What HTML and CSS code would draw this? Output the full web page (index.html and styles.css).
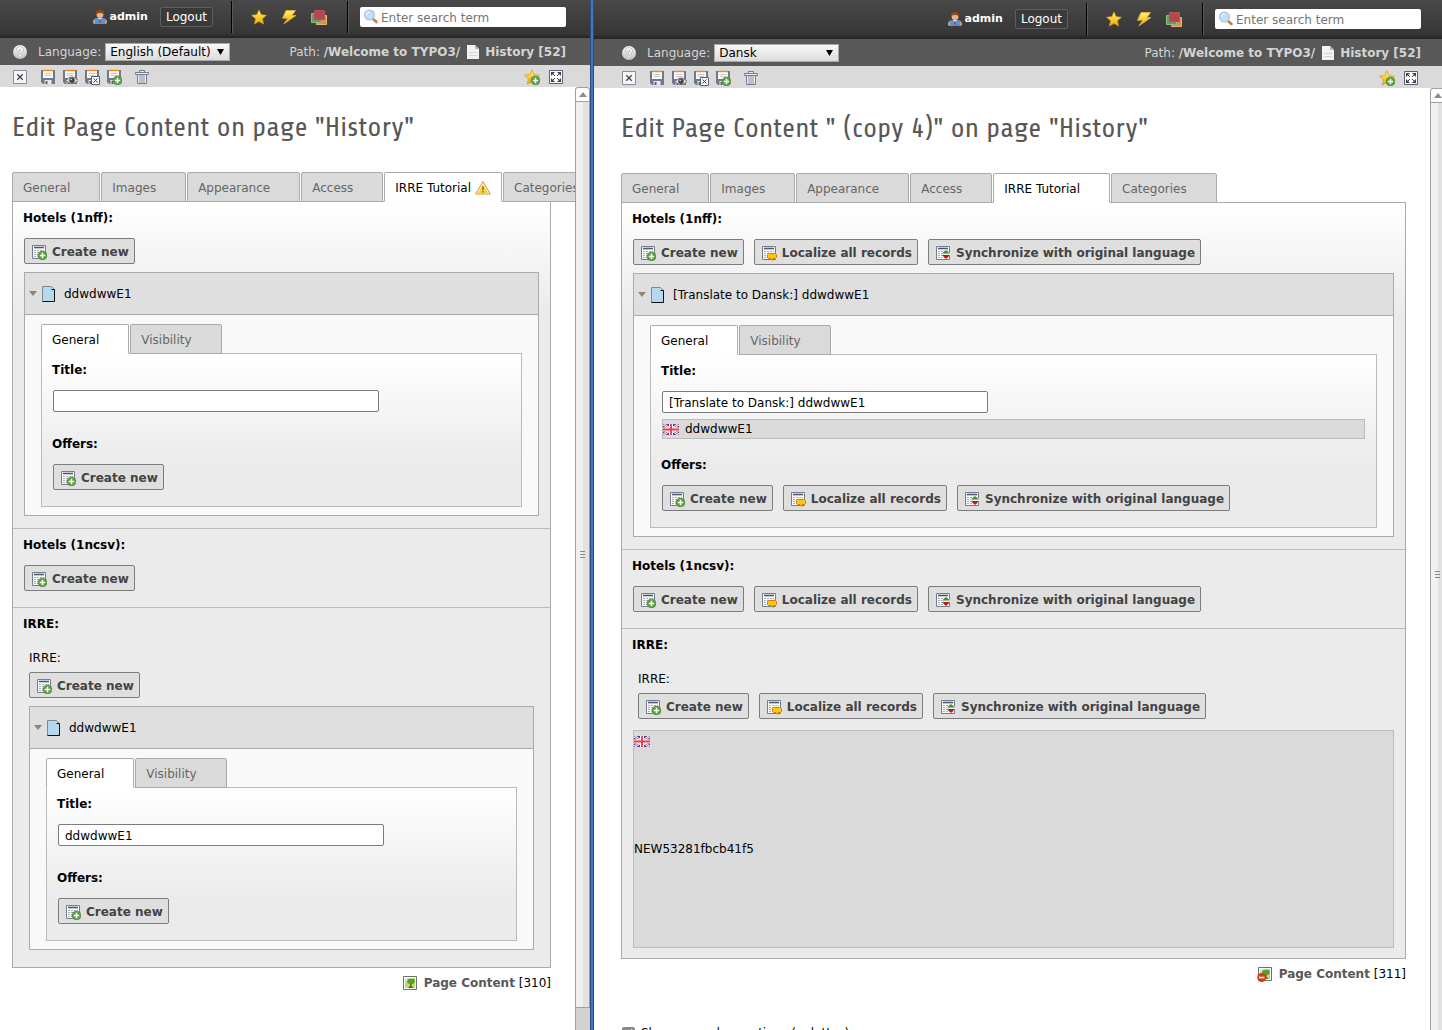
FILE: index.html
```html
<!DOCTYPE html>
<html lang="en">
<head>
<meta charset="utf-8">
<title>TYPO3 - Edit Page Content</title>
<link rel="stylesheet" href="styles.css">
</head>
<body>
<svg class="sprite" aria-hidden="true">
  <defs>
    <linearGradient id="gold" x1="0" y1="0" x2="0" y2="1"><stop offset="0" stop-color="#fff07a"/><stop offset=".5" stop-color="#fbcf2f"/><stop offset="1" stop-color="#f0a818"/></linearGradient>
    <linearGradient id="ball" x1="0" y1="0" x2="0" y2="1"><stop offset="0" stop-color="#f4f4f4"/><stop offset="1" stop-color="#c4c4c4"/></linearGradient>
  </defs>
  <symbol id="user" viewBox="0 0 16 16">
    <path d="M1 14c0-4 2-5 5-5h4c3 0 5 1 5 5l-2 1H3z" fill="#5b93d0"/><path d="M1 14c0-2 .5-3 1.500-4L3 15z M15 14c0-2-.5-3-1.500-4L13 15z" fill="#e8a060"/>
    <path d="M6 9l2 3 2-3z" fill="#cfe0f2"/><path d="M7.500 10h1l.5 3-1 1-1-1z" fill="#d03030"/>
    <circle cx="8" cy="5.500" r="3.500" fill="#eeb180"/><path d="M4 6.500C3 2 5.500 1 8 1s5 1 4 5.500c-1-2-2-2.500-4-2.500S5 4.500 4 6.500z" fill="#8a4a20"/>
  </symbol>
  <symbol id="star" viewBox="0 0 16 16"><path d="M8 .8l2.200 4.800 5.300.6-4 3.600 1.200 5.400L8 12.500l-4.700 2.700 1.200-5.400-4-3.600 5.300-.6z" fill="url(#gold)" stroke="#c98d12" stroke-width=".6"/></symbol>
  <symbol id="bolt" viewBox="0 0 16 16"><path d="M5 1.500h9.500L11 6.500h4L3 14.800 6.800 9.200H1.500z" fill="url(#gold)" stroke="#e0a83a" stroke-width=".9"/></symbol>
  <symbol id="stack" viewBox="0 0 16 16"><path d="M5.500 6.500h10v9h-10z" fill="#d98f4e" stroke="#f0b070"/><path d="M.5 4.500h10v9H.5z" fill="#6c9a64" stroke="#8fbd86"/><path d="M3.500 1.500h10v9h-10z" fill="#b8474c" stroke="#b25458"/></symbol>
  <symbol id="lens" viewBox="0 0 16 16"><path d="M9.500 9.500l4 3.500" stroke="#c5813a" stroke-width="2.600" stroke-linecap="round"/><circle cx="6.500" cy="6" r="4.900" fill="#c2defa" stroke="#a9c4e6" stroke-width="1.200"/><path d="M3.500 6a3 3 0 0 1 3-3" stroke="#fff" fill="none"/></symbol>
  <symbol id="help" viewBox="0 0 16 16"><circle cx="8" cy="8" r="7" fill="url(#ball)"/><path d="M5.700 6.200c0-3 4.600-3 4.600-.3 0 1.700-2.200 1.700-2.200 3.300M8 10.800v1.600" stroke="#a4a4a4" stroke-width="2.600" fill="none"/><path d="M5.700 6.200c0-3 4.600-3 4.600-.3 0 1.700-2.200 1.700-2.200 3.300M8 10.800v1.600" stroke="#fff" stroke-width="1.600" fill="none"/></symbol>
  <symbol id="page" viewBox="0 0 16 16"><path d="M2 1h8l4 4v10H2z" fill="#f3f3f3"/><path d="M10 1v4h4z" fill="#b5b5b5"/><path d="M4 8.500h8M4 11.500h8" stroke="#d4d4d4"/></symbol>
  <symbol id="close" viewBox="0 0 16 16"><path d="M1.500 1.500h13v13h-13z" fill="#f5f5f8" stroke="#858da0"/><path d="M5.300 5.300l5.400 5.400M10.700 5.300l-5.400 5.400" stroke="#444" stroke-width="1.300"/></symbol>
  <symbol id="floppy" viewBox="0 0 16 16"><path d="M1 1h14v14H3l-2-2z" fill="#70788c"/><path d="M3 1h10v8H3z" fill="#fafafa"/><path d="M3 1.500h10" stroke="#f08a10" stroke-width="1.400"/><path d="M4.500 4.500h7M4.500 6.500h7" stroke="#b9bcc4" stroke-width=".8"/><path d="M4.500 11h7v4h-7z" fill="#e8e8ec"/><path d="M5.500 12h2v3h-2z" fill="#596175"/></symbol>
  <symbol id="plus" viewBox="0 0 16 16"><circle cx="11.500" cy="11.500" r="4.600" fill="#5c9e45" stroke="#4b8738" stroke-width=".5"/><path d="M8.800 11.500h5.400M11.500 8.800v5.400" stroke="#fff" stroke-width="1.500"/></symbol>
  <symbol id="save-view" viewBox="0 0 16 16"><use href="#floppy"/><path d="M4 11.500c3-4.500 9-4.500 12 0-3 4-9 4-12 0z" fill="#ddd" stroke="#666"/><circle cx="10" cy="11.300" r="2.700" fill="#444"/><circle cx="9.300" cy="10.500" r=".8" fill="#ddd"/></symbol>
  <symbol id="save-close" viewBox="0 0 16 16"><use href="#floppy"/><path d="M7.500 7.500h8v8h-8z" fill="#f7f7f7" stroke="#596175"/><path d="M9.500 9.500l4 4M13.500 9.500l-4 4" stroke="#444"/></symbol>
  <symbol id="save-new" viewBox="0 0 16 16"><use href="#floppy"/><use href="#plus"/></symbol>
  <symbol id="trash" viewBox="0 0 16 16"><path d="M5.500 3V1.500h5V3M1.500 3.500h13v2h-13zM3.500 5.500v9h9v-9" fill="#eceef2" stroke="#737b8e"/><path d="M6 6v8M8 6v8M10 6v8" stroke="#8a91a2"/></symbol>
  <symbol id="bookmark" viewBox="0 0 16 16"><use href="#star"/><use href="#plus"/></symbol>
  <symbol id="expand" viewBox="0 0 16 16"><path d="M1.500 1.500h13v13h-13z" fill="#fafafa" stroke="#596175"/><path d="M3 3h4L3 7zM13 3v4L9 3zM3 13V9l4 4zM13 13H9l4-4z" fill="#3b4050"/><path d="M4 4l3 3M12 4L9 7M4 12l3-3M12 12L9 9" stroke="#3b4050"/></symbol>
  <symbol id="list" viewBox="0 0 16 16"><path d="M1.500 1.500h13v13h-13z" fill="#fafafa" stroke="#737d92"/><path d="M3 3.500h10" stroke="#4f586b" stroke-width="1.600"/><path d="M3 6.500h10M3 8.500h10M3 10.500h10M3 12.500h10" stroke="#a9adb8" stroke-dasharray="2 1"/></symbol>
  <symbol id="create" viewBox="0 0 16 16"><use href="#list"/><use href="#plus"/></symbol>
  <symbol id="localize" viewBox="0 0 16 16"><use href="#list"/><path d="M7.500 8.500h7l1 1v3l-1 1h-2.500v2l-2-2H7.500l-1-1v-3z" fill="#fdc60c" stroke="#dc7f08"/></symbol>
  <symbol id="sync" viewBox="0 0 16 16"><use href="#list"/><path d="M7 7.500h8v3H7z" fill="#eef2ee"/><path d="M7 8.500L11 5l4 3.500z" fill="#3f8f3a"/><path d="M7 10h8l-4 4z" fill="#c01818"/></symbol>
  <symbol id="record" viewBox="0 0 16 16"><path d="M1.500.5h9l3 3v12h-12z" fill="#b3d8f0" stroke="#7d8890"/><path d="M10.500 3.500h3v12H1.500" fill="none" stroke="#111"/></symbol>
  <symbol id="warning" viewBox="0 0 16 16"><path d="M8 1.500L15.300 14H.7z" fill="#fdf3c0" stroke="#d8953a" stroke-linejoin="round"/><path d="M8 4.500L13 13H3z" fill="#f6cf45"/><path d="M8 6.500v3.500M8 11v1.500" stroke="#9a6a10" stroke-width="1.500"/></symbol>
  <symbol id="flag" viewBox="0 0 16 11"><path d="M0 0h16v11H0z" fill="#34459c"/><path d="M0 0l16 11M16 0L0 11" stroke="#fff" stroke-width="2.600"/><path d="M0 0l16 11M16 0L0 11" stroke="#e0455a" stroke-width=".9"/><path d="M8 0v11M0 5.500h16" stroke="#fff" stroke-width="4"/><path d="M8 0v11M0 5.500h16" stroke="#e8384a" stroke-width="1.800"/></symbol>
  <symbol id="picture" viewBox="0 0 16 16"><path d="M1.500 1.500h13v13h-13z" fill="#fff" stroke="#6f6f6f"/><path d="M3 3h10v10H3z" fill="#b9dd6a"/><path d="M3 3h5L3 7z" fill="#cfe6fa"/><path d="M6 4h6l1 3-2 2-5-.5-1-2z" fill="#4fa62a"/><path d="M8 8.500h1.500V11l2 2H6l2-2z" fill="#6a5a20"/></symbol>
  <symbol id="picture-hidden" viewBox="0 0 16 16"><use href="#picture"/><circle cx="4.700" cy="11.500" r="4.500" fill="#d93a1e"/><path d="M2 11.500h5.400" stroke="#fff" stroke-width="1.600"/></symbol>
</svg>

<main class="compare">
  <section class="pane">
    <header class="topbar">
      <a class="user" href="#"><svg class="icon"><use href="#user"/></svg>admin</a>
      <button class="logout" type="button">Logout</button>
      <nav class="shortcuts">
        <a href="#" aria-label="Bookmarks"><svg class="icon"><use href="#star"/></svg></a>
        <a href="#" aria-label="Clear cache"><svg class="icon"><use href="#bolt"/></svg></a>
        <a href="#" aria-label="Workspaces"><svg class="icon"><use href="#stack"/></svg></a>
      </nav>
      <label class="search"><svg class="icon"><use href="#lens"/></svg><input type="search" placeholder="Enter search term" aria-label="Search"></label>
    </header>
    <div class="docbar">
      <a class="help" href="#" aria-label="Help"><svg class="icon"><use href="#help"/></svg></a>
      <label for="lang-l">Language:</label>
      <span class="select"><select id="lang-l"><option>English (Default)</option></select><svg viewBox="0 0 8 8"><path d="M0 1h8L4 8z"/></svg></span>
      <p class="path">Path: <b>/Welcome to TYPO3/</b><svg class="icon"><use href="#page"/></svg><b>History [52]</b></p>
    </div>
    <div class="toolbar">
      <button type="button" aria-label="Close"><svg class="icon"><use href="#close"/></svg></button>
      <span class="saves">
        <button type="button" aria-label="Save"><svg class="icon"><use href="#floppy"/></svg></button>
        <button type="button" aria-label="Save and view"><svg class="icon"><use href="#save-view"/></svg></button>
        <button type="button" aria-label="Save and close"><svg class="icon"><use href="#save-close"/></svg></button>
        <button type="button" aria-label="Save and new"><svg class="icon"><use href="#save-new"/></svg></button>
      </span>
      <button type="button" aria-label="Delete"><svg class="icon"><use href="#trash"/></svg></button>
      <span class="extras">
        <button type="button" aria-label="Bookmark"><svg class="icon"><use href="#bookmark"/></svg></button>
        <button type="button" aria-label="Open in window"><svg class="icon"><use href="#expand"/></svg></button>
      </span>
    </div>
    <div class="viewport">
      <form class="content">
        <h1>Edit Page Content on page "History"</h1>
        <div class="tabs">
          <button type="button" class="tab">General</button><button type="button" class="tab">Images</button><button type="button" class="tab">Appearance</button><button type="button" class="tab">Access</button><button type="button" class="tab active warn">IRRE Tutorial<svg class="icon"><use href="#warning"/></svg></button><button type="button" class="tab">Categories</button>
        </div>
        <div class="panel">
          <section class="field">
            <h2>Hotels (1nff):</h2>
            <div class="actions"><button type="button" class="btn"><svg class="icon"><use href="#create"/></svg>Create new</button></div>
            <div class="record">
              <div class="record-head"><svg class="twisty" viewBox="0 0 8 5"><path d="M0 0h8L4 5z"/></svg><svg class="icon"><use href="#record"/></svg><span>ddwdwwE1</span></div>
              <div class="record-body">
                <div class="tabs"><button type="button" class="tab active">General</button><button type="button" class="tab">Visibility</button></div>
                <div class="panel inner">
                  <h2><label for="title-1">Title:</label></h2>
                  <input class="text" id="title-1" type="text">
                  <h2 class="spaced">Offers:</h2>
                  <div class="actions"><button type="button" class="btn"><svg class="icon"><use href="#create"/></svg>Create new</button></div>
                </div>
              </div>
            </div>
          </section>
          <section class="field simple">
            <h2>Hotels (1ncsv):</h2>
            <div class="actions"><button type="button" class="btn"><svg class="icon"><use href="#create"/></svg>Create new</button></div>
          </section>
          <section class="field nested">
            <h2>IRRE:</h2>
            <h3>IRRE:</h3>
            <div class="actions"><button type="button" class="btn"><svg class="icon"><use href="#create"/></svg>Create new</button></div>
            <div class="record">
              <div class="record-head"><svg class="twisty" viewBox="0 0 8 5"><path d="M0 0h8L4 5z"/></svg><svg class="icon"><use href="#record"/></svg><span>ddwdwwE1</span></div>
              <div class="record-body">
                <div class="tabs"><button type="button" class="tab active">General</button><button type="button" class="tab">Visibility</button></div>
                <div class="panel inner">
                  <h2><label for="title-2">Title:</label></h2>
                  <input class="text" id="title-2" type="text" value="ddwdwwE1">
                  <h2 class="spaced">Offers:</h2>
                  <div class="actions"><button type="button" class="btn"><svg class="icon"><use href="#create"/></svg>Create new</button></div>
                </div>
              </div>
            </div>
          </section>
        </div>
        <p class="recinfo"><svg class="icon"><use href="#picture"/></svg><span><b>Page Content</b> [310]</span></p>
      </form>
      <div class="scrollbar"><div class="up"><svg viewBox="0 0 8 5"><path d="M0 5h8L4 0z"/></svg></div><div class="thumb"><span class="grip"></span></div><div class="track"></div></div>
    </div>
  </section>

  <div class="divider"></div>

  <section class="pane translated">
    <header class="topbar">
      <a class="user" href="#"><svg class="icon"><use href="#user"/></svg>admin</a>
      <button class="logout" type="button">Logout</button>
      <nav class="shortcuts">
        <a href="#" aria-label="Bookmarks"><svg class="icon"><use href="#star"/></svg></a>
        <a href="#" aria-label="Clear cache"><svg class="icon"><use href="#bolt"/></svg></a>
        <a href="#" aria-label="Workspaces"><svg class="icon"><use href="#stack"/></svg></a>
      </nav>
      <label class="search"><svg class="icon"><use href="#lens"/></svg><input type="search" placeholder="Enter search term" aria-label="Search"></label>
    </header>
    <div class="docbar">
      <a class="help" href="#" aria-label="Help"><svg class="icon"><use href="#help"/></svg></a>
      <label for="lang-r">Language:</label>
      <span class="select"><select id="lang-r"><option>Dansk</option></select><svg viewBox="0 0 8 8"><path d="M0 1h8L4 8z"/></svg></span>
      <p class="path">Path: <b>/Welcome to TYPO3/</b><svg class="icon"><use href="#page"/></svg><b>History [52]</b></p>
    </div>
    <div class="toolbar">
      <button type="button" aria-label="Close"><svg class="icon"><use href="#close"/></svg></button>
      <span class="saves">
        <button type="button" aria-label="Save"><svg class="icon"><use href="#floppy"/></svg></button>
        <button type="button" aria-label="Save and view"><svg class="icon"><use href="#save-view"/></svg></button>
        <button type="button" aria-label="Save and close"><svg class="icon"><use href="#save-close"/></svg></button>
        <button type="button" aria-label="Save and new"><svg class="icon"><use href="#save-new"/></svg></button>
      </span>
      <button type="button" aria-label="Delete"><svg class="icon"><use href="#trash"/></svg></button>
      <span class="extras">
        <button type="button" aria-label="Bookmark"><svg class="icon"><use href="#bookmark"/></svg></button>
        <button type="button" aria-label="Open in window"><svg class="icon"><use href="#expand"/></svg></button>
      </span>
    </div>
    <div class="viewport">
      <form class="content">
        <h1>Edit Page Content " (copy 4)" on page "History"</h1>
        <div class="tabs">
          <button type="button" class="tab">General</button><button type="button" class="tab">Images</button><button type="button" class="tab">Appearance</button><button type="button" class="tab">Access</button><button type="button" class="tab active">IRRE Tutorial</button><button type="button" class="tab">Categories</button>
        </div>
        <div class="panel">
          <section class="field">
            <h2>Hotels (1nff):</h2>
            <div class="actions">
              <button type="button" class="btn"><svg class="icon"><use href="#create"/></svg>Create new</button>
              <button type="button" class="btn"><svg class="icon"><use href="#localize"/></svg>Localize all records</button>
              <button type="button" class="btn"><svg class="icon"><use href="#sync"/></svg>Synchronize with original language</button>
            </div>
            <div class="record">
              <div class="record-head"><svg class="twisty" viewBox="0 0 8 5"><path d="M0 0h8L4 5z"/></svg><svg class="icon"><use href="#record"/></svg><span>[Translate to Dansk:] ddwdwwE1</span></div>
              <div class="record-body">
                <div class="tabs"><button type="button" class="tab active">General</button><button type="button" class="tab">Visibility</button></div>
                <div class="panel inner">
                  <h2><label for="title-3">Title:</label></h2>
                  <input class="text" id="title-3" type="text" value="[Translate to Dansk:] ddwdwwE1">
                  <div class="original"><svg class="flag"><use href="#flag"/></svg>ddwdwwE1</div>
                  <h2 class="after-original">Offers:</h2>
                  <div class="actions">
                    <button type="button" class="btn"><svg class="icon"><use href="#create"/></svg>Create new</button>
                    <button type="button" class="btn"><svg class="icon"><use href="#localize"/></svg>Localize all records</button>
                    <button type="button" class="btn"><svg class="icon"><use href="#sync"/></svg>Synchronize with original language</button>
                  </div>
                </div>
              </div>
            </div>
          </section>
          <section class="field simple">
            <h2>Hotels (1ncsv):</h2>
            <div class="actions">
              <button type="button" class="btn"><svg class="icon"><use href="#create"/></svg>Create new</button>
              <button type="button" class="btn"><svg class="icon"><use href="#localize"/></svg>Localize all records</button>
              <button type="button" class="btn"><svg class="icon"><use href="#sync"/></svg>Synchronize with original language</button>
            </div>
          </section>
          <section class="field nested">
            <h2>IRRE:</h2>
            <h3>IRRE:</h3>
            <div class="actions">
              <button type="button" class="btn"><svg class="icon"><use href="#create"/></svg>Create new</button>
              <button type="button" class="btn"><svg class="icon"><use href="#localize"/></svg>Localize all records</button>
              <button type="button" class="btn"><svg class="icon"><use href="#sync"/></svg>Synchronize with original language</button>
            </div>
            <div class="placeholder"><svg class="flag"><use href="#flag"/></svg><span>NEW53281fbcb41f5</span></div>
          </section>
        </div>
        <p class="recinfo"><svg class="icon"><use href="#picture-hidden"/></svg><span><b>Page Content</b> [311]</span></p>
        <label class="option"><input type="checkbox" checked>Show secondary options (palettes)</label>
      </form>
      <div class="scrollbar"><div class="up"><svg viewBox="0 0 8 5"><path d="M0 5h8L4 0z"/></svg></div><div class="thumb"><span class="grip"></span></div></div>
    </div>
  </section>
</main>
</body>
</html>
```

FILE: styles.css
```css
* { box-sizing: border-box; }
body { margin: 0; font: 12px/16px Verdana, "DejaVu Sans", sans-serif; color: #000; background: #fff; overflow: hidden; }
h1, h2, h3, p { margin: 0; font-size: 12px; line-height: 16px; }
h3 { font-weight: normal; }
button, input, select { font: inherit; color: inherit; margin: 0; }
svg { display: block; flex: none; }
.sprite { position: absolute; width: 0; height: 0; }
.icon { width: 16px; height: 16px; }
.flag { width: 16px; height: 11px; }

.compare { display: grid; grid-template-columns: 590fr 4px 851fr; height: 100vh; margin-right: -3px; }
.pane { --gutter: 12px; display: flex; flex-direction: column; min-width: 0; min-height: 0; }
.translated { --gutter: 27px; }
.divider { background: #4473c8; border: solid #2b4a80; border-width: 0 1px; }

.topbar { display: flex; justify-content: flex-end; height: 38px; padding: 0 24px 4px 12px; align-items: center; color: #fff; background: linear-gradient(#494949, #363636 34px, #242424); flex: none; }
.translated .topbar { height: 39px; padding-top: 2px; }
.user { display: flex; align-items: center; gap: 2px; font-size: 11px; font-weight: bold; color: #fff; text-decoration: none; }
.logout { height: 20px; padding: 0 5px; margin: 0 18px 0 12px; background: #3a3a3a; border: 1px solid #5e5e5e; border-radius: 2px; color: #fff; line-height: 16px; }
.shortcuts { display: flex; align-items: center; gap: 14px; height: 32px; padding: 0 20px 0 19px; border: solid #000; border-width: 0 1px; box-shadow: inset 1px 0 #5a5a5a, 1px 0 #5a5a5a; }
.search { display: flex; align-items: center; gap: 2px; width: 206px; height: 20px; margin-left: 12px; padding: 0 3px; border-radius: 2px; background: #fff; }
.search input { flex: 1; min-width: 0; padding: 2px 0 0; border: 0; outline: 0; background: none; appearance: none; color: #333; }
.search input::placeholder { color: #757575; opacity: 1; }

.docbar { display: flex; align-items: center; height: 27px; padding: 0 24px 0 var(--gutter); background: #585858; color: #d4d4d4; flex: none; }
.help { margin-right: 10px; }
.select { display: grid; width: 125px; height: 18px; margin-left: 4px; align-items: center; }
.select select { grid-area: 1 / 1; width: 100%; height: 18px; padding: 0 4px; appearance: none; border: 1px solid #a9a9a9; border-radius: 0; background: linear-gradient(#f8f8f8, #dcdcdc); color: #000; line-height: 16px; }
.select svg { grid-area: 1 / 1; justify-self: end; width: 7px; height: 7px; margin-right: 6px; pointer-events: none; }
.path { display: flex; align-items: center; margin-left: auto; white-space: pre; }
.path .icon { margin: 0 4px 0 5px; }

.toolbar { display: flex; align-items: center; height: 22px; padding: 2px 26px 0 var(--gutter); background: #dadada; flex: none; }
.toolbar button { padding: 0; border: 0; background: none; }
.saves { display: flex; gap: 6px; margin: 0 12px; }
.extras { display: flex; gap: 8px; margin-left: auto; }

.viewport { display: flex; flex: 1; min-height: 0; }
.content { flex: 1; min-width: 0; overflow: hidden; padding: 24px 24px 0 var(--gutter); }
h1 { margin-bottom: 29px; font: 28px/32px Share, "Liberation Sans Narrow", "Arial Narrow", Roboto, sans-serif; color: #585858; white-space: nowrap; }

.tabs { display: flex; gap: 1px; position: relative; z-index: 1; margin-bottom: -1px; }
.tab { flex: none; display: flex; align-items: center; gap: 4px; height: 30px; padding: 2px 29px 0 10px; border: 1px solid #aaa; border-radius: 2px 2px 0 0; background: #dadada; color: #666; white-space: nowrap; }
.tab.active { border-bottom-color: #fff; background: #fff; color: #000; }
.tab.warn { padding-right: 10px; }

.panel { border: 1px solid #aaa; background: #ebebeb linear-gradient(#fff, #ebebeb) no-repeat 0 0 / 100% 110px; }
.panel.inner { padding: 8px 11px 16px; border-color: #bbb; }
.panel h2 { margin: 0 0 12px -1px; }
.field { padding: 8px 11px 12px; }
.field + .field { border-top: 1px solid #bbb; }
.field.simple { padding-bottom: 16px; }
.field.nested { padding: 8px 16px 17px; }
.field.nested > h2 { margin: 0 0 18px -6px; }
.field h3 { margin-bottom: 6px; }
.panel.inner .spaced { margin-top: 24px; }
.panel.inner .after-original { margin-top: 18px; }

.actions { display: flex; gap: 10px; }
.btn { display: flex; align-items: center; gap: 5px; height: 26px; padding: 1px 5px 0 6px; border: 1px solid #7c7c7c; border-radius: 2px; background: #dfdfdf; color: #434343; font-weight: bold; white-space: nowrap; }

.record { margin-top: 8px; border: 1px solid #aaa; background: #f9f9f9; }
.record-head { display: flex; align-items: center; height: 42px; padding-left: 4px; border-bottom: 1px solid #aaa; background: #dfdfdf; }
.record-head .icon { margin: 0 7px 0 4px; }
.twisty { width: 8px; height: 5px; fill: #8c857b; }
.record-body { padding: 9px 16px 8px; }

.text { display: block; width: 326px; max-width: 100%; height: 22px; padding: 1px 6px 0; border: 1px solid #7c7c7c; border-radius: 2px; background: #fff; }
.original { display: flex; align-items: center; gap: 6px; height: 20px; margin-top: 6px; border: 1px solid #bbb; background: #dadada; }
.placeholder { display: flex; flex-direction: column; height: 218px; margin: 11px -5px -7px; padding-top: 5px; border: 1px solid #bbb; background: #dadada; }
.placeholder span { margin-top: 94px; }

.recinfo { display: flex; justify-content: flex-end; gap: 6px; margin-top: 7px; }
.recinfo b { color: #585858; }
.option { display: flex; align-items: center; gap: 6px; margin-top: 43px; }
.option input { width: 13px; height: 13px; margin-left: 1px; accent-color: #888; }

.scrollbar { flex: none; width: 15px; display: flex; flex-direction: column; }
.up { display: grid; place-items: center; height: 14px; border: 1px solid #a0a0a0; border-bottom: 0; border-radius: 3px 3px 0 0; background: #fdfdfd; }
.up svg { width: 8px; height: 5px; fill: #8c8c8c; }
.thumb { flex: 1; display: grid; place-items: center; border: 1px solid #a0a0a0; background: linear-gradient(90deg, #f0f0f0 50%, #e2e2e2 50%); }
.grip { width: 5px; height: 7px; background: repeating-linear-gradient(#888 0 1px, transparent 1px 3px); }
.track { height: 22px; border-left: 1px solid #a0a0a0; background: #d2d2d2; }
.translated .scrollbar { margin-bottom: -16px; }
```
